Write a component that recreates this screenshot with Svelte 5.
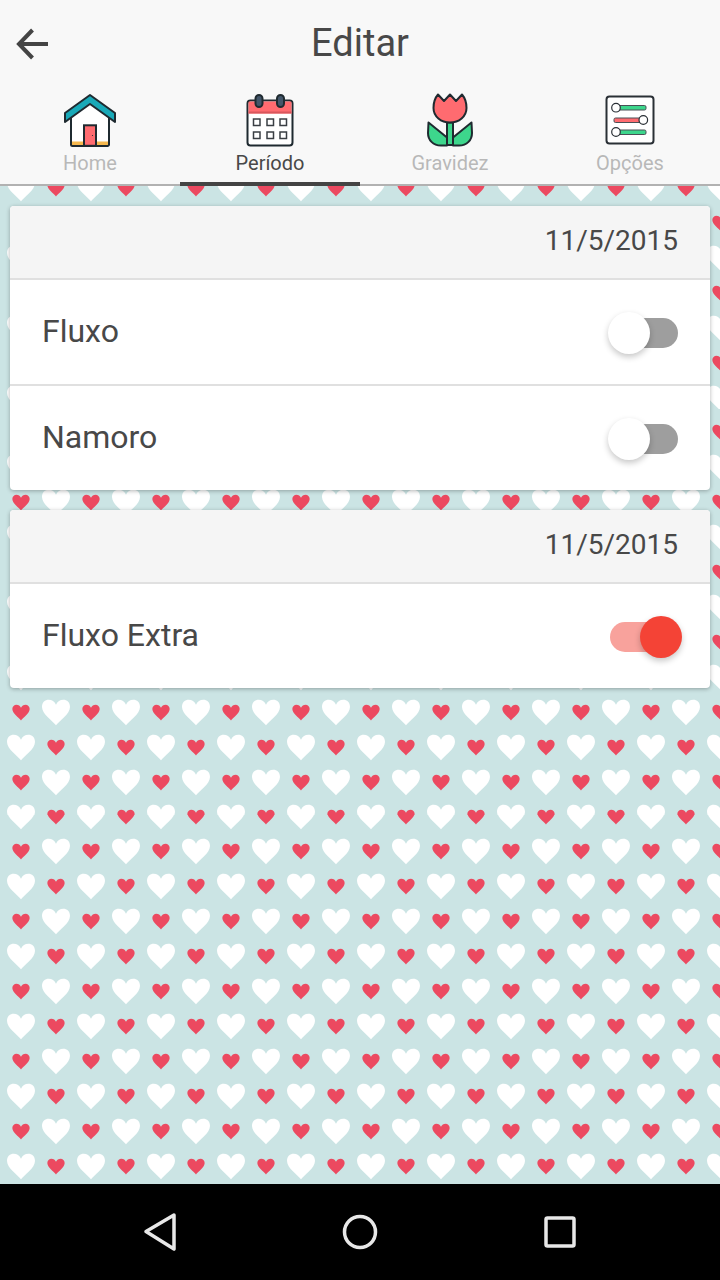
<script>
  const hearts = encodeURIComponent(
    `<svg xmlns="http://www.w3.org/2000/svg" width="70" height="69.84" viewBox="0 0 70 69.84">` +
      `<defs><filter id="b" x="-10%" y="-10%" width="120%" height="120%"><feGaussianBlur stdDeviation=".6"/></filter>` +
      `<path id="h" d="M0 12.800C-3.600 8-14 1.400-14-5.600-14-10-10.800-12.600-7.400-12.600-4-12.600-1.500-10.600 0-7.800 1.500-10.600 4-12.600 7.400-12.600 10.800-12.600 14-10 14-5.600 14 1.400 3.600 8 0 12.800Z"/></defs>` +
      `<g filter="url(#b)"><g fill="#fff"><use href="#h" x="56" y="17.460"/><use href="#h" x="21" y="52.380"/></g>` +
      `<g fill="#ec4a60"><use href="#h" transform="translate(21 17.460) scale(.62)"/><use href="#h" transform="translate(56 52.380) scale(.62)"/></g></g>` +
      `</svg>`
  );

  const cards = [
    { date: "11/5/2015", rows: [{ label: "Fluxo", on: false }, { label: "Namoro", on: false }] },
    { date: "11/5/2015", rows: [{ label: "Fluxo Extra", on: true }] }
  ];
</script>

<div class="screen">
  <header>
    <div class="titlebar">
      <svg class="back" width="34" height="34" viewBox="0 0 34 34">
        <path d="M32 17H3.500M16.500 3 3 17l13.500 14" fill="none" stroke="#444" stroke-width="4" />
      </svg>
      <h1>Editar</h1>
    </div>
    <nav>
      <div class="tab">
        <svg width="60" height="56" viewBox="60 92 60 56">
          <path d="M71 112 90 99l19 13v32.500a1.500 1.500 0 0 1-1.500 1.500h-35a1.500 1.500 0 0 1-1.500-1.500Z" fill="#fff" />
          <path d="M72 141.500h36v3.500H72Z" fill="#f6b84e" />
          <path d="M71 112v32.500a1.500 1.500 0 0 0 1.500 1.500h35a1.500 1.500 0 0 0 1.500-1.500V112" fill="none" stroke="#1f2a30" stroke-width="2" />
          <path d="M90 95 65 113v9l25-18 25 18v-9Z" fill="#18a9b8" stroke="#1f2a30" stroke-width="2" stroke-linejoin="round" />
          <rect x="84" y="125.300" width="12" height="20.500" fill="#ff6b70" stroke="#1f2a30" stroke-width="2" />
          <circle cx="92.500" cy="135.500" r=".6" fill="#1f2a30" />
        </svg>
        <span>Home</span>
      </div>
      <div class="tab active">
        <svg width="60" height="56" viewBox="240 92 60 56">
          <rect x="247.500" y="100.500" width="45" height="45" rx="3" fill="#fff" stroke="#1f2a30" stroke-width="2" />
          <path d="M248.500 113.500v-11a1 1 0 0 1 1-1h41a1 1 0 0 1 1 1v11Z" fill="#ff6b70" />
          <path d="M248.500 111.500h43v2h-43Z" fill="#d9565c" />
          <rect x="255.500" y="95" width="7" height="12" rx="3.500" fill="#43566a" stroke="#1f2a30" stroke-width="2" />
          <rect x="277" y="95" width="7" height="12" rx="3.500" fill="#43566a" stroke="#1f2a30" stroke-width="2" />
          <g fill="#fff" stroke="#3a3f44" stroke-width="1.500">
            <rect x="253.500" y="119" width="6.500" height="6.500" />
            <rect x="267" y="119" width="6.500" height="6.500" />
            <rect x="280" y="119" width="6.500" height="6.500" />
            <rect x="253.500" y="132" width="6.500" height="6.500" />
            <rect x="267" y="132" width="6.500" height="6.500" />
            <rect x="280" y="132" width="6.500" height="6.500" />
          </g>
        </svg>
        <span>Período</span>
      </div>
      <div class="tab">
        <svg width="60" height="56" viewBox="420 92 60 56">
          <path d="M447 122.500h6V145h-6Z" fill="#3dd68c" stroke="#1f2a30" stroke-width="2" />
          <path d="M428.500 122.500 447 137.500V145.500H441C433 145.500 428 140 428 133Z" fill="#3dd68c" stroke="#1f2a30" stroke-width="2" stroke-linejoin="round" />
          <path d="M471.500 122.500 453 137.500V145.500H459C467 145.500 472 140 472 133Z" fill="#3dd68c" stroke="#1f2a30" stroke-width="2" stroke-linejoin="round" />
          <path d="M438 94.500 444 101 450 94.500 456 101 462 94.500C465 98 466.500 102 466.500 108 466.500 116.500 459 122.500 450 122.500S433.500 116.500 433.500 108C433.500 102 435 98 438 94.500Z" fill="#ff6b70" stroke="#1f2a30" stroke-width="2" stroke-linejoin="round" />
        </svg>
        <span>Gravidez</span>
      </div>
      <div class="tab">
        <svg width="60" height="56" viewBox="600 92 60 56">
          <rect x="606.500" y="96.500" width="47" height="47" rx="3" fill="#fff" stroke="#2a3036" stroke-width="2" />
          <rect x="616" y="105.500" width="30" height="4.500" rx="1.500" fill="#3dd68c" stroke="#4a5056" />
          <rect x="614" y="118" width="29" height="4.500" rx="1.500" fill="#ff6b70" stroke="#4a5056" />
          <rect x="616" y="130" width="30" height="4.500" rx="1.500" fill="#3dd68c" stroke="#4a5056" />
          <g fill="#fff" stroke="#2a3036" stroke-width="1.200">
            <circle cx="616" cy="107.700" r="4.300" />
            <circle cx="643.300" cy="120" r="4.300" />
            <circle cx="616" cy="132" r="4.300" />
          </g>
        </svg>
        <span>Opções</span>
      </div>
    </nav>
  </header>

  <main style="background-image: url(&quot;data:image/svg+xml,{hearts}&quot;)">
    {#each cards as card}
      <section class="card">
        <div class="date">{card.date}</div>
        {#each card.rows as row}
          <div class="row">
            <span>{row.label}</span>
            <div class="switch" class:on={row.on}><i></i></div>
          </div>
        {/each}
      </section>
    {/each}
  </main>

  <footer>
    <svg width="34" height="40" viewBox="0 0 34 40">
      <path d="M31 3 3 19.500 31 37Z" fill="none" stroke="#e8e8e8" stroke-width="3.500" stroke-linejoin="round" />
    </svg>
    <svg width="36" height="36" viewBox="0 0 36 36">
      <circle cx="18" cy="18" r="15.500" fill="none" stroke="#e8e8e8" stroke-width="3.500" />
    </svg>
    <svg width="32" height="32" viewBox="0 0 32 32">
      <rect x="2" y="2" width="28" height="28" rx="1.500" fill="none" stroke="#e8e8e8" stroke-width="3.500" />
    </svg>
  </footer>
</div>

<style>
  :global(body) {
    margin: 0;
    font-family: Roboto, sans-serif;
  }

  .screen {
    display: flex;
    flex-direction: column;
    width: 720px;
    height: 1280px;
    overflow: hidden;
  }

  header {
    height: 186px;
    flex: none;
    box-sizing: border-box;
    background: #f8f8f8;
    border-bottom: 2px solid #b2b2b2;
  }

  .titlebar {
    display: flex;
    align-items: center;
    justify-content: center;
    position: relative;
    height: 92px;
    padding-bottom: 6px;
    box-sizing: border-box;
  }

  .back {
    position: absolute;
    left: 16px;
    top: 27px;
  }

  h1 {
    margin: 0;
    font-size: 38px;
    font-weight: 400;
    color: #484848;
  }

  nav {
    display: flex;
  }

  .tab {
    display: flex;
    flex-direction: column;
    align-items: center;
    width: 180px;
    height: 94px;
    box-sizing: border-box;
    font-size: 20px;
    color: #b8b8b8;
  }

  .tab svg {
    display: block;
    flex: none;
  }

  .tab span {
    line-height: 30px;
  }

  .tab.active {
    color: #484848;
    border-bottom: 4px solid #444;
  }

  main {
    flex: 1;
    display: flex;
    flex-direction: column;
    gap: 20px;
    padding: 20px 10px;
    background-color: #cbe4e4;
    background-size: 70px 69.84px;
    background-position: 0 20px;
  }

  .card {
    background: #fff;
    border-radius: 4px;
    overflow: hidden;
    box-shadow: 0 1px 4px rgba(0, 0, 0, 0.3);
  }

  .date {
    display: flex;
    align-items: center;
    justify-content: flex-end;
    height: 74px;
    box-sizing: border-box;
    padding: 0 32px 4px 0;
    background: #f5f5f5;
    font-size: 28px;
    color: #484848;
    border-bottom: 2px solid #e0e0e0;
  }

  .row {
    display: flex;
    align-items: center;
    justify-content: space-between;
    height: 106px;
    box-sizing: border-box;
    padding: 0 32px;
    font-size: 32px;
    color: #484848;
    border-bottom: 2px solid #e0e0e0;
  }

  .row span {
    margin-bottom: 2px;
  }

  .row:last-child {
    height: 104px;
    border-bottom: none;
  }

  .switch {
    position: relative;
    width: 68px;
    height: 30px;
    margin-top: 2px;
    border-radius: 15px;
    background: #9e9e9e;
  }

  .switch i {
    position: absolute;
    left: -2px;
    top: -6px;
    width: 42px;
    height: 42px;
    border-radius: 50%;
    background: #fff;
    box-shadow: 0 3px 6px rgba(0, 0, 0, 0.22);
  }

  .switch.on {
    background: #f8a29c;
  }

  .switch.on i {
    left: 30px;
    background: #f44336;
  }

  footer {
    height: 96px;
    flex: none;
    background: #000;
    position: relative;
  }

  footer svg {
    position: absolute;
  }

  footer svg:nth-child(1) {
    left: 143px;
    top: 28px;
  }

  footer svg:nth-child(2) {
    left: 342px;
    top: 30px;
  }

  footer svg:nth-child(3) {
    left: 544px;
    top: 32px;
  }
</style>
